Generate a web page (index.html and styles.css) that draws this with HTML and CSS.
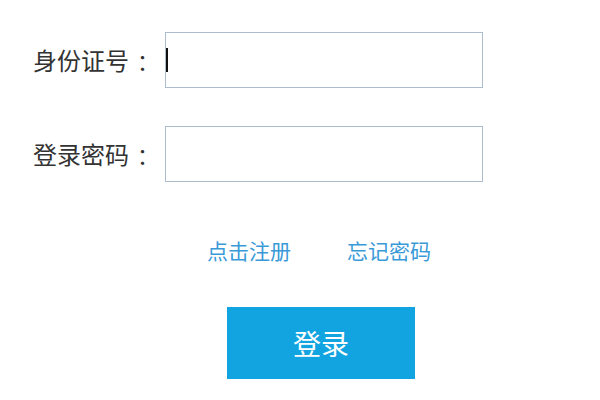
FILE: index.html
```html
<!DOCTYPE html>
<html lang="zh-CN">

<head>
    <meta charset="UTF-8">
    <meta name="viewport" content="width=device-width, initial-scale=1.0">
    <title>登录</title>
    <link rel="stylesheet" href="styles.css">
</head>

<body>

    <form class="login-form" id="loginForm">
        <div class="form-row">
            <label for="idNumber">身份证号<span class="colon">：</span></label>
            <span class="field active">
                <input type="text" id="idNumber" name="idNumber">
            </span>
        </div>

        <div class="form-row">
            <label for="password">登录密码<span class="colon">：</span></label>
            <span class="field">
                <input type="password" id="password" name="password">
            </span>
        </div>

        <div class="links">
            <a href="#">点击注册</a>
            <a href="#">忘记密码</a>
        </div>

        <button type="button" class="login-btn">登录</button>
    </form>

</body>

</html>
```

FILE: styles.css
```css
body {
    font-family: "Microsoft YaHei", "Noto Sans CJK SC", sans-serif;
    margin: 0;
    padding: 0;
    background-color: #fff;
    color: #333;
}

.login-form {
    display: flex;
    flex-direction: column;
    align-items: flex-start;
    padding: 32px 0 0 33px;
}

.form-row {
    display: flex;
    align-items: center;
    margin-bottom: 38px;
}

.form-row:nth-child(2) {
    margin-bottom: 0;
}

.form-row label {
    width: 132px;
    font-size: 24px;
    line-height: 30px;
    color: #333;
    white-space: nowrap;
}

/* centred full-width colon */
.colon {
    font-family: "Noto Sans CJK JP", sans-serif;
    font-size: 22px;
    margin-left: 8px;
}

.field {
    position: relative;
    display: block;
}

.field input {
    display: block;
    width: 318px;
    height: 56px;
    padding: 0 4px;
    box-sizing: border-box;
    border: 1px solid #aebdcd;
    outline: none;
    font-size: 20px;
}

/* fake text caret in the focused field */
.field.active::after {
    content: "";
    position: absolute;
    left: 1px;
    top: 16px;
    width: 2px;
    height: 24px;
    background-color: #111;
}

.links {
    display: flex;
    gap: 56px;
    margin: 56px 0 0 174px;
}

.links a {
    font-size: 21px;
    line-height: 24px;
    color: #3a9ad8;
    text-decoration: none;
}

.login-btn {
    width: 188px;
    height: 72px;
    margin: 45px 0 0 194px;
    padding: 0;
    border: none;
    background-color: #12a4e1;
    color: #fff;
    font-family: inherit;
    font-size: 28px;
    cursor: pointer;
}

.login-btn:hover {
    background-color: #0f95cd;
}
```
